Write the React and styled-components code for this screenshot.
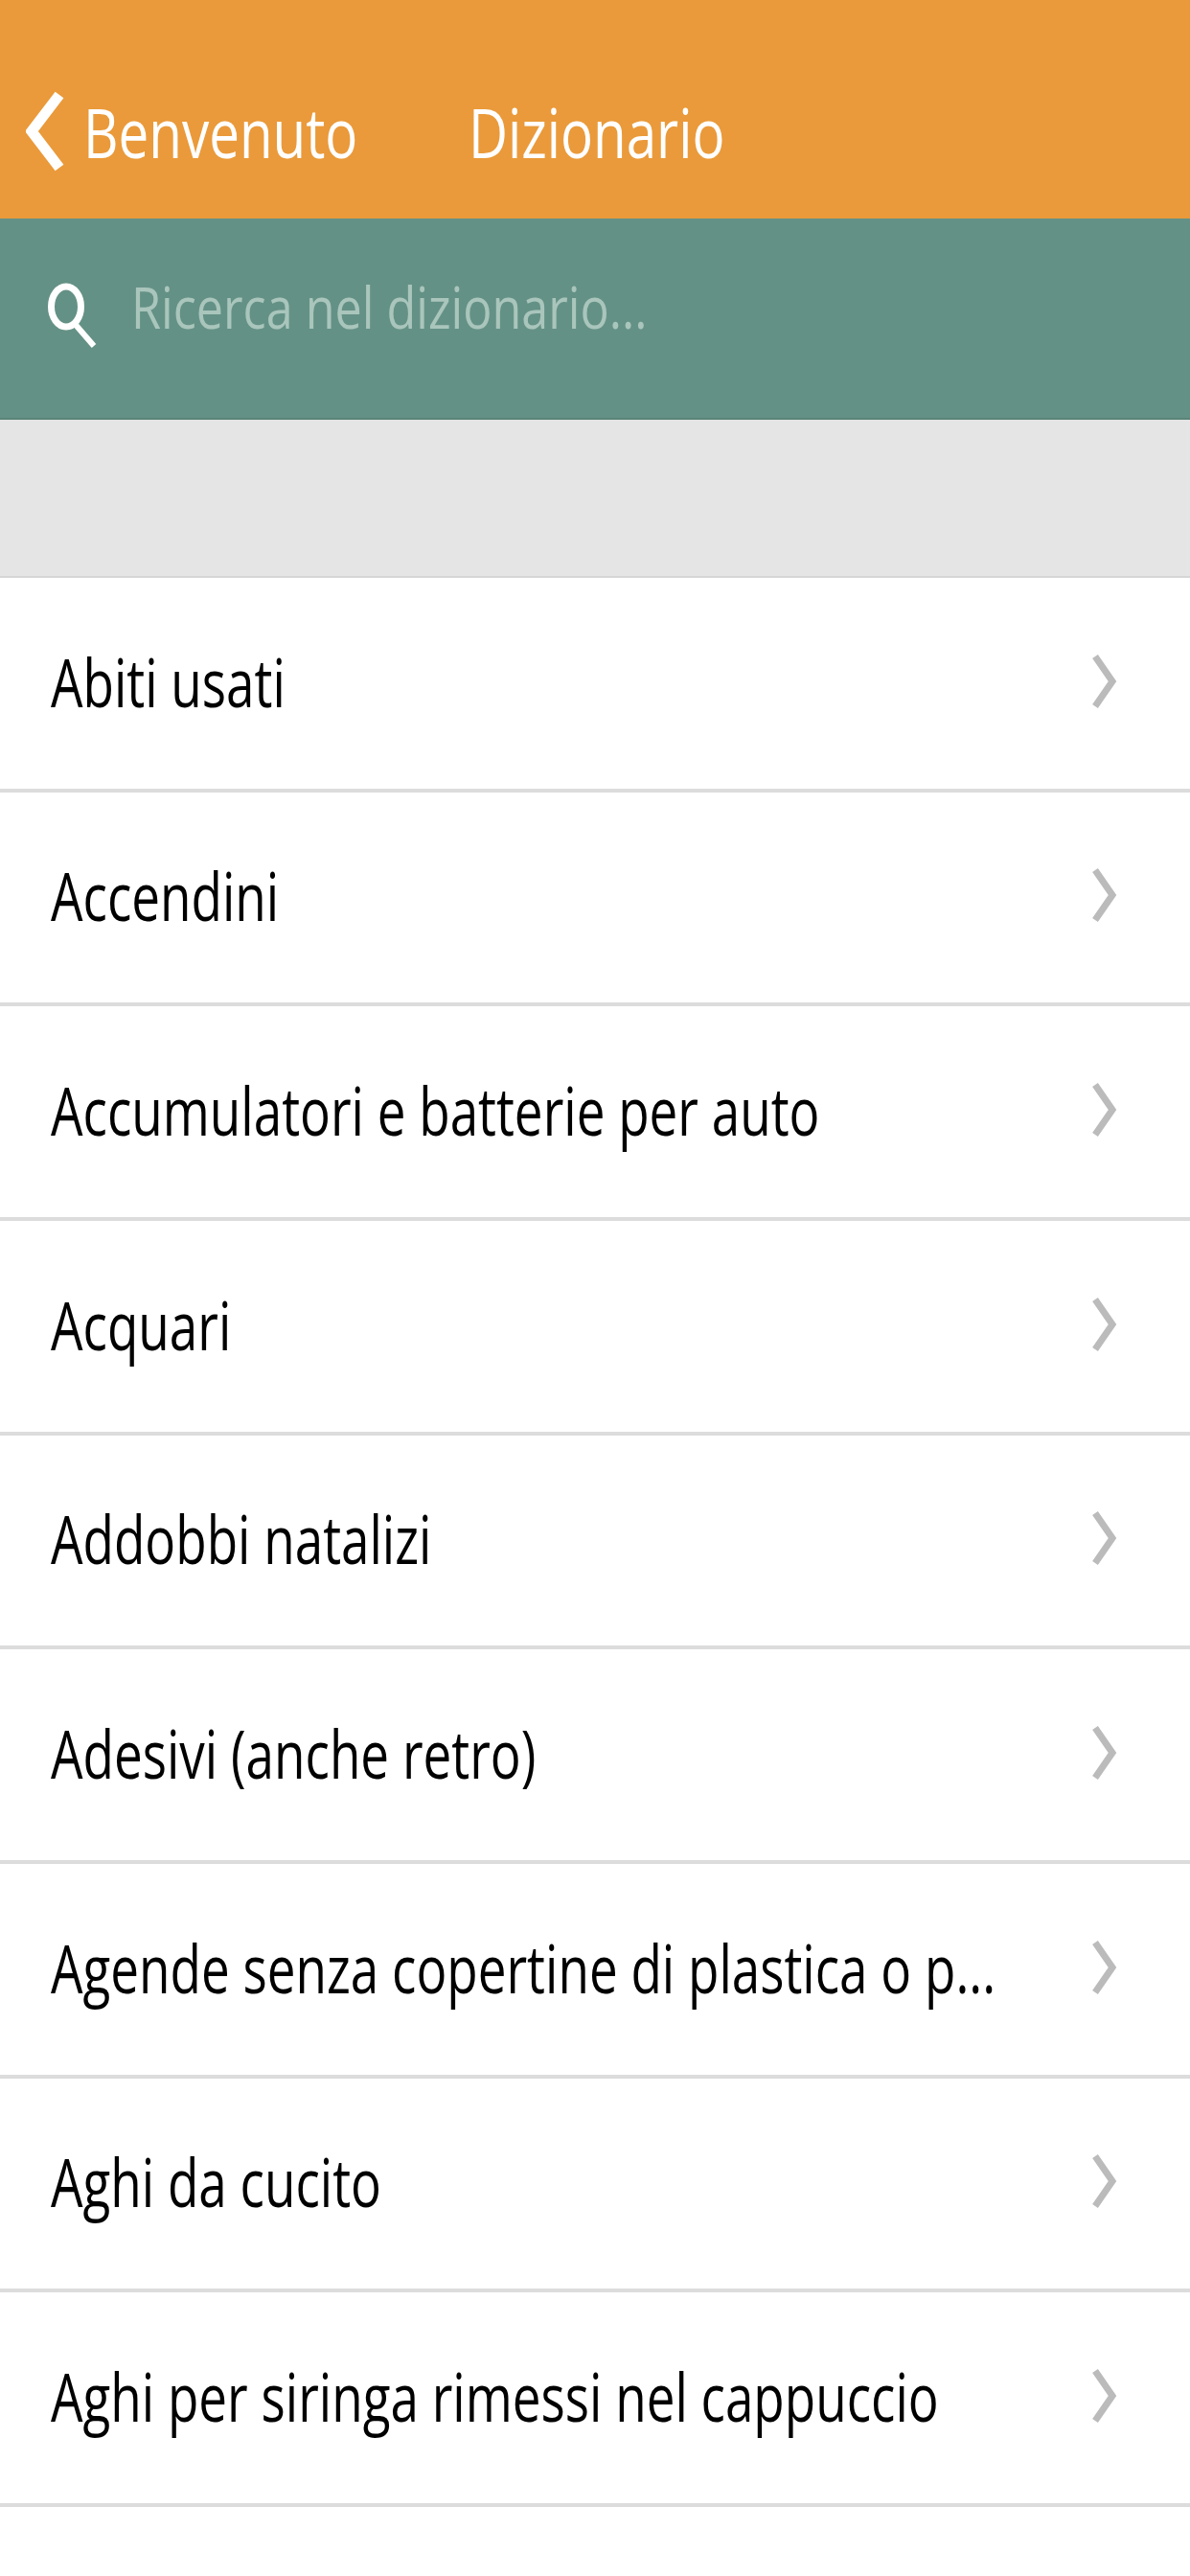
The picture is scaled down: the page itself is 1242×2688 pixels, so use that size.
import React from "react";
import styled, { createGlobalStyle } from "styled-components";

const GlobalStyle = createGlobalStyle`
  html, body {
    margin: 0;
    padding: 0;
    background: #fff;
  }
  body {
    font-family: "Open Sans", "Liberation Sans", sans-serif;
  }
`;

const Page = styled.div`
  width: 1242px;
  height: 2688px;
  overflow: hidden;
  background: #fff;
`;

const TopBar = styled.header`
  height: 228px;
  box-sizing: border-box;
  padding: 45px 0 0 27px;
  display: flex;
  align-items: center;
  background: #ea9a3a;
`;

const BackLink = styled.div`
  width: 462px;
  display: flex;
  align-items: center;
  gap: 20px;
`;

// the source screenshot is squeezed sideways, so all the text is narrowed
const Squeezed = styled.span`
  display: inline-block;
  white-space: nowrap;
  transform: scaleX(0.757);
  transform-origin: left center;
`;

const BarText = styled(Squeezed)`
  font-size: 72px;
  line-height: 84px;
  color: #fff;
  transform: scaleX(0.785);
`;

const SearchBar = styled.div`
  height: 210px;
  box-sizing: border-box;
  padding: 0 0 16px 50px;
  display: flex;
  align-items: center;
  gap: 33px;
  background: #649185;
  border-bottom: 2px solid #5a8478;
`;

const SearchGlyph = styled.svg`
  flex-shrink: 0;
  margin-top: 10px;
`;

const Placeholder = styled(Squeezed)`
  font-size: 60px;
  line-height: 72px;
  color: #a9c5bc;
  margin-bottom: 8px;
  transform: scaleX(0.838);
`;

const Gap = styled.div`
  height: 163px;
  background: #e5e5e5;
  border-bottom: 2px solid #d6d6d6;
`;

const Row = styled.div`
  height: 223.67px;
  box-sizing: border-box;
  padding: 0 76px 4px 53px;
  display: flex;
  align-items: center;
  border-bottom: 4px solid #dcdcdc;
`;

const RowLabel = styled(Squeezed)`
  flex: 1;
  min-width: 0;
  font-size: 70px;
  line-height: 84px;
  color: #000;
`;

const RowChevron = styled.svg`
  flex-shrink: 0;
`;

const Chevron = () => (
  <RowChevron width="26" height="58" viewBox="0 0 26 58" fill="none">
    <path d="M3 3 L21 29 L3 55" stroke="#bbbbbb" strokeWidth="7" />
  </RowChevron>
);

const BackIcon = () => (
  <svg width="40" height="84" viewBox="0 0 40 84" fill="none">
    <path d="M35 4 L6 42 L35 80" stroke="#fff" strokeWidth="11" />
  </svg>
);

const SearchIcon = () => (
  <SearchGlyph width="54" height="70" viewBox="0 0 54 70" fill="none">
    <ellipse cx="19" cy="26" rx="15.5" ry="21" stroke="#fff" strokeWidth="7" />
    <path d="M29 45 L48 67" stroke="#fff" strokeWidth="6" />
  </SearchGlyph>
);

const items = [
  "Abiti usati",
  "Accendini",
  "Accumulatori e batterie per auto",
  "Acquari",
  "Addobbi natalizi",
  "Adesivi (anche retro)",
  "Agende senza copertine di plastica o p...",
  "Aghi da cucito",
  "Aghi per siringa rimessi nel cappuccio",
];

export default function App() {
  return (
    <Page>
      <GlobalStyle />
      <TopBar>
        <BackLink>
          <BackIcon />
          <BarText>Benvenuto</BarText>
        </BackLink>
        <BarText>Dizionario</BarText>
      </TopBar>
      <SearchBar>
        <SearchIcon />
        <Placeholder>Ricerca nel dizionario...</Placeholder>
      </SearchBar>
      <Gap />
      {items.map((item) => (
        <Row key={item}>
          <RowLabel>{item}</RowLabel>
          <Chevron />
        </Row>
      ))}
    </Page>
  );
}
